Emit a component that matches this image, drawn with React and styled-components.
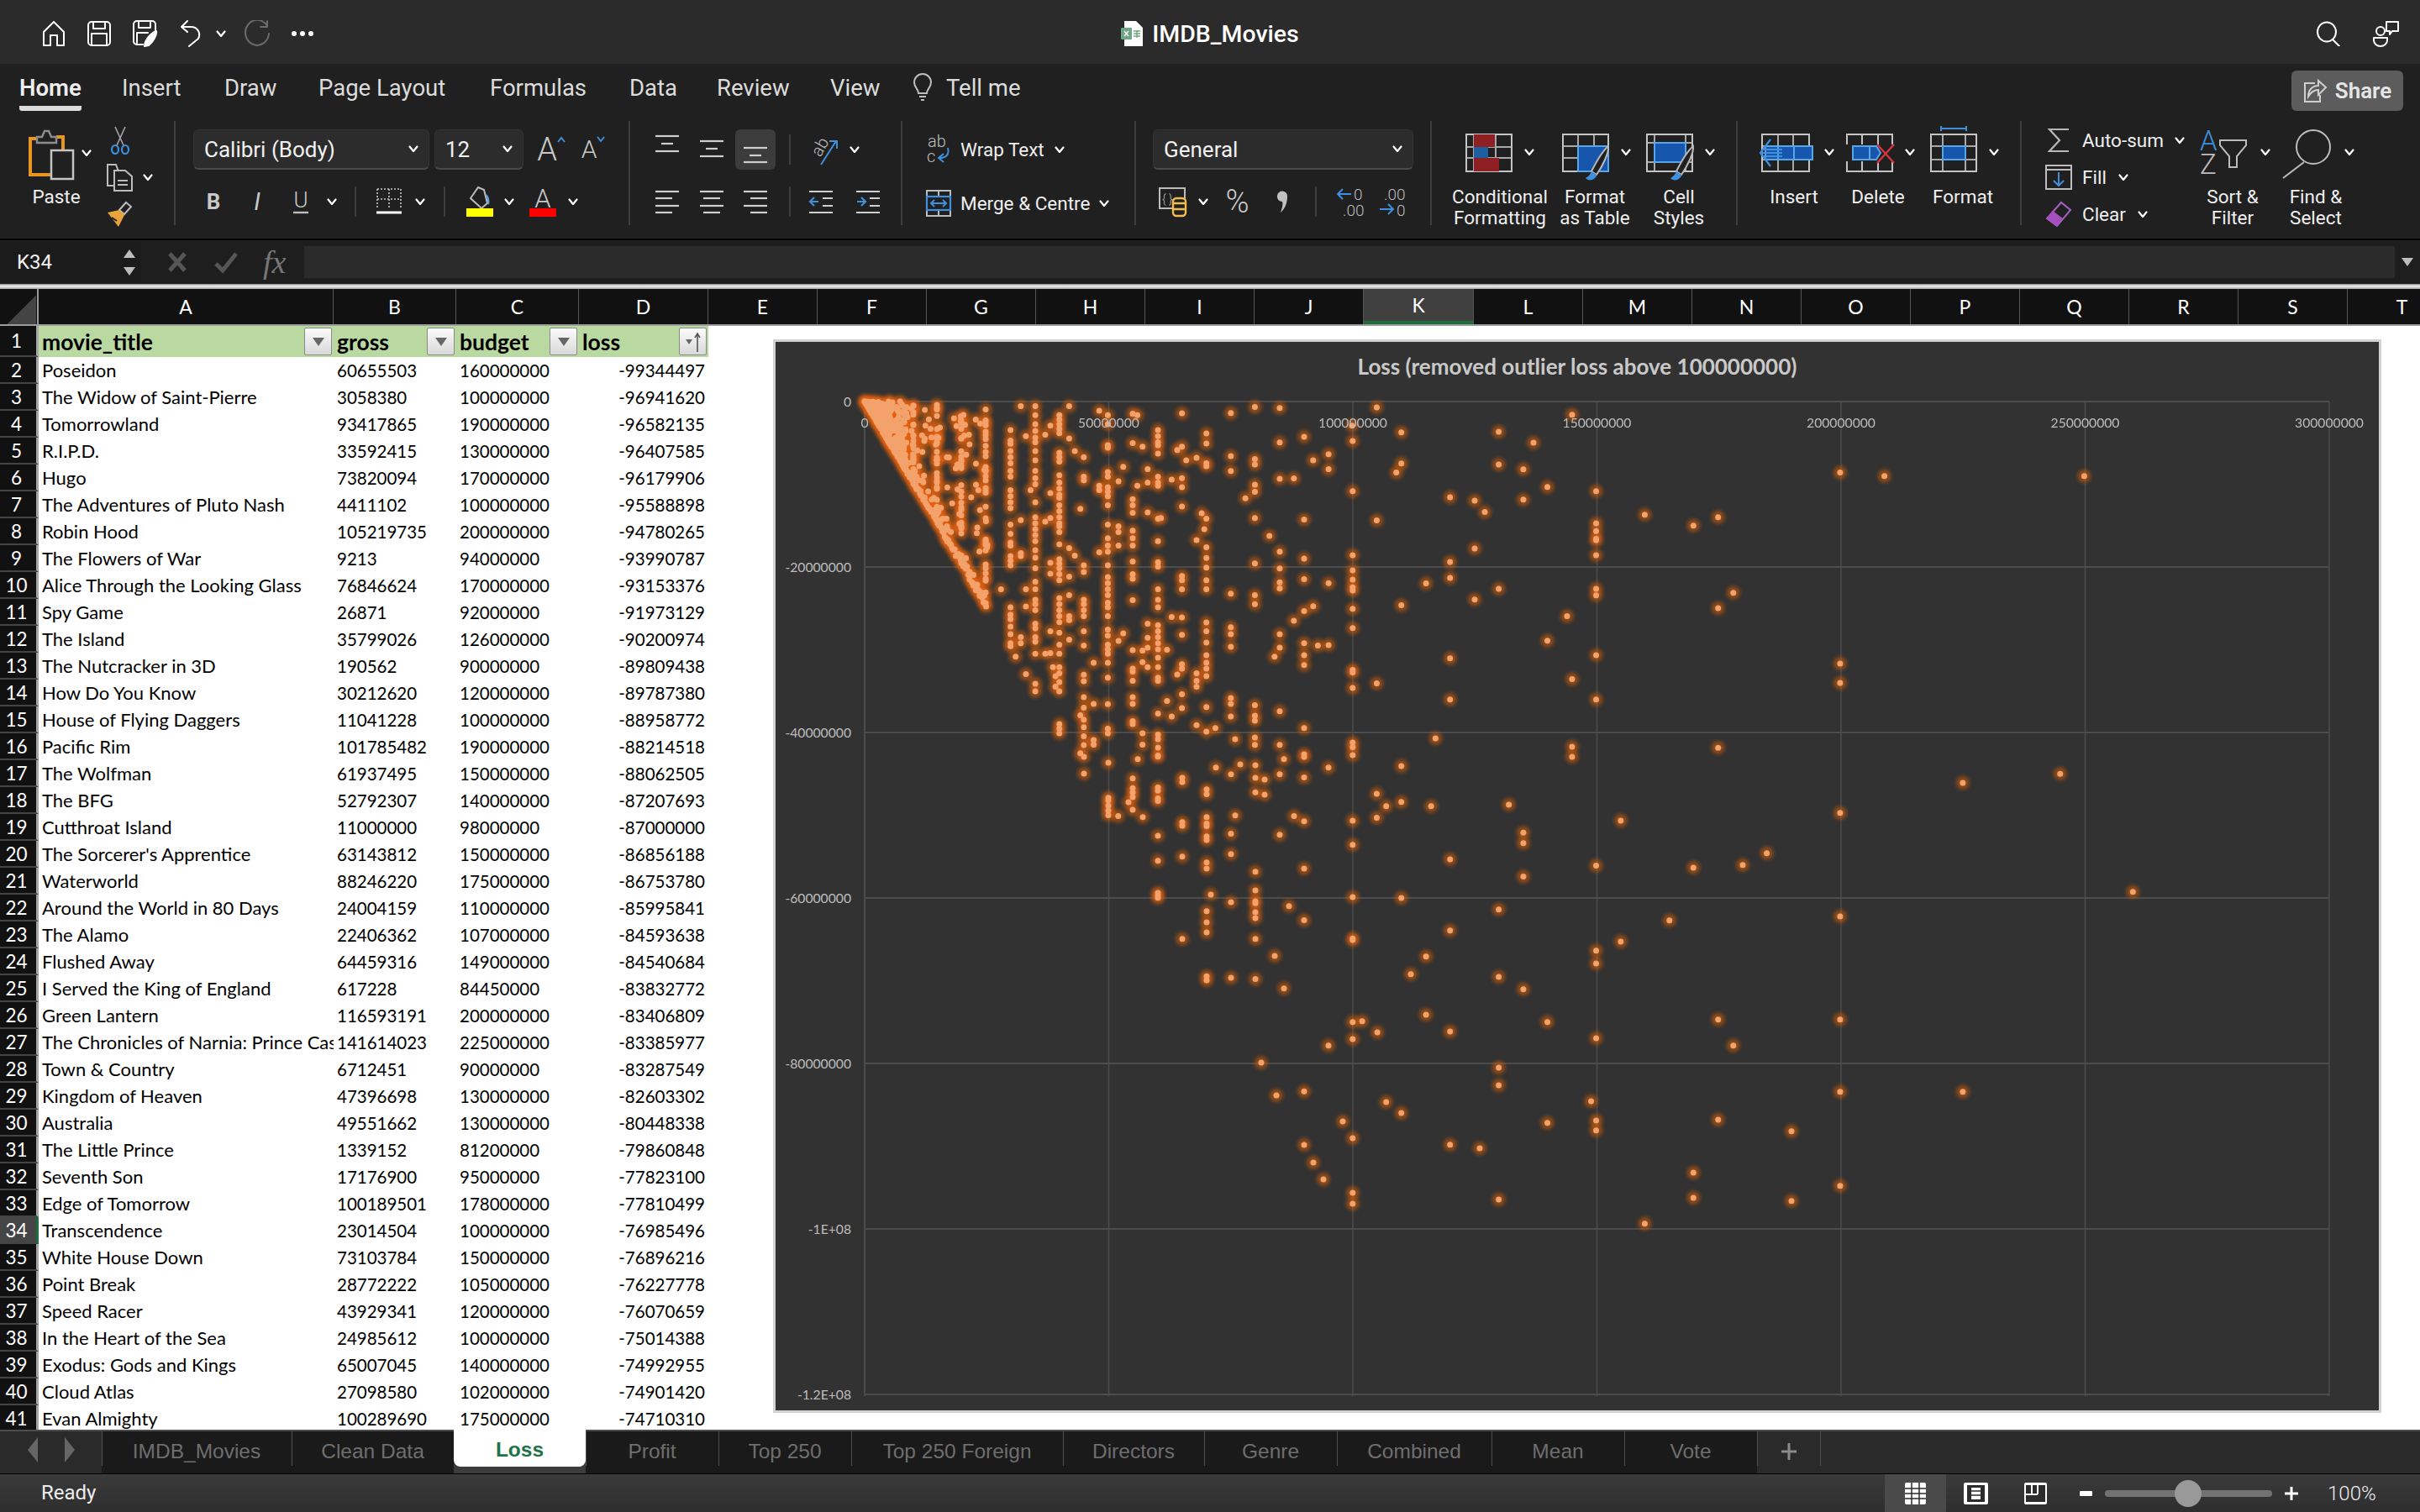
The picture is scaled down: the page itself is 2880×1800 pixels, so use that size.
import styled, { createGlobalStyle } from 'styled-components';

const GlobalStyle = createGlobalStyle`
  html, body { margin: 0; padding: 0; background: #1f1f1f; overflow: hidden; }
  * { box-sizing: border-box; }
`;

const UI = `Roboto, "Liberation Sans", sans-serif`;
const CELL = `Lato, "Liberation Sans", sans-serif`;

const movies = [
  ['Poseidon', 60655503, 160000000, -99344497],
  ['The Widow of Saint-Pierre', 3058380, 100000000, -96941620],
  ['Tomorrowland', 93417865, 190000000, -96582135],
  ['R.I.P.D.', 33592415, 130000000, -96407585],
  ['Hugo', 73820094, 170000000, -96179906],
  ['The Adventures of Pluto Nash', 4411102, 100000000, -95588898],
  ['Robin Hood', 105219735, 200000000, -94780265],
  ['The Flowers of War', 9213, 94000000, -93990787],
  ['Alice Through the Looking Glass', 76846624, 170000000, -93153376],
  ['Spy Game', 26871, 92000000, -91973129],
  ['The Island', 35799026, 126000000, -90200974],
  ['The Nutcracker in 3D', 190562, 90000000, -89809438],
  ['How Do You Know', 30212620, 120000000, -89787380],
  ['House of Flying Daggers', 11041228, 100000000, -88958772],
  ['Pacific Rim', 101785482, 190000000, -88214518],
  ['The Wolfman', 61937495, 150000000, -88062505],
  ['The BFG', 52792307, 140000000, -87207693],
  ['Cutthroat Island', 11000000, 98000000, -87000000],
  ["The Sorcerer's Apprentice", 63143812, 150000000, -86856188],
  ['Waterworld', 88246220, 175000000, -86753780],
  ['Around the World in 80 Days', 24004159, 110000000, -85995841],
  ['The Alamo', 22406362, 107000000, -84593638],
  ['Flushed Away', 64459316, 149000000, -84540684],
  ['I Served the King of England', 617228, 84450000, -83832772],
  ['Green Lantern', 116593191, 200000000, -83406809],
  ['The Chronicles of Narnia: Prince Caspian', 141614023, 225000000, -83385977],
  ['Town & Country', 6712451, 90000000, -83287549],
  ['Kingdom of Heaven', 47396698, 130000000, -82603302],
  ['Australia', 49551662, 130000000, -80448338],
  ['The Little Prince', 1339152, 81200000, -79860848],
  ['Seventh Son', 17176900, 95000000, -77823100],
  ['Edge of Tomorrow', 100189501, 178000000, -77810499],
  ['Transcendence', 23014504, 100000000, -76985496],
  ['White House Down', 73103784, 150000000, -76896216],
  ['Point Break', 28772222, 105000000, -76227778],
  ['Speed Racer', 43929341, 120000000, -76070659],
  ['In the Heart of the Sea', 24985612, 100000000, -75014388],
  ['Exodus: Gods and Kings', 65007045, 140000000, -74992955],
  ['Cloud Atlas', 27098580, 102000000, -74901420],
  ['Evan Almighty', 100289690, 175000000, -74710310],
];

const columns = 'EFGHIJKLMNOPQRST'.split('');

const ribbonTabs = [
  ['Home', 122], ['Insert', 122], ['Draw', 112], ['Page Layout', 204],
  ['Formulas', 166], ['Data', 104], ['Review', 135], ['View', 98],
];

const tabs = [
  ['IMDB_Movies', 226], ['Clean Data', 193], ['Loss', 157], ['Profit', 158],
  ['Top 250', 158], ['Top 250 Foreign', 252], ['Directors', 168], ['Genre', 158],
  ['Combined', 184], ['Mean', 158], ['Vote', 158],
];

// scatter points, read off the chart in page pixels
const farRight = [[51,65],[360,88],[12,122],[90,143],[244,141],[13,170],[299,175],[90,240],[244,243],[283,258],[82,268],[784,268],[854,279],[1170,279],[321,313],[13,326],[398,326],[167,345],[206,355],[283,352],[222,391],[475,399],[591,407],[51,417],[398,426],[552,433],[398,450],[398,478],[398,474],[206,504],[13,525],[398,525],[167,546],[13,572],[167,596],[13,601],[129,613],[13,625],[13,635],[244,630],[398,630],[398,650],[615,642],[206,663],[90,681],[591,690],[13,692],[352,715],[13,752],[321,791],[398,836],[167,846],[784,862],[13,882],[13,890],[360,911],[784,922],[51,924],[13,938],[167,974],[398,974],[144,1095],[13,1108],[13,1122],[360,1121],[591,1124],[13,1147],[360,1152],[90,1181],[1132,1205],[978,1233],[51,1267],[90,1293],[260,1301],[66,1306],[137,1306],[784,1327],[51,1342],[13,1351],[437,1351],[283,1388],[283,1421],[13,1426],[668,1452],[167,1471],[630,1489],[398,1491],[552,1497],[283,1525]]
  .map(([x, y]) => [1600 + x / 1.329, 460 + y / 2.613]);

const lowerRight = [[13,84],[90,87],[1247,65],[244,128],[784,153],[514,167],[167,203],[13,232],[13,237],[437,243],[398,275],[129,296],[398,321],[105,359],[244,369],[283,413],[129,504],[13,530],[28,527],[321,530],[591,521],[784,521],[52,567],[167,564],[13,591],[398,588],[615,614],[244,693],[244,756],[784,779],[978,779],[66,816],[390,813],[90,855],[398,882],[321,890],[591,879],[398,917],[707,920],[13,945],[167,968],[214,981],[552,1068],[784,1115],[13,1140],[244,1164],[552,1158],[707,1169],[13,1179],[475,1250]]
  .map(([x, y]) => [1600 + x / 1.329, 1040 + y / 3]);

const lowerMiddle = [[570,3],[657,21],[762,10],[834,2],[570,55],[744,70],[921,68],[921,81],[1041,36],[1128,26],[1095,57],[1182,29],[1182,68],[1215,73],[1284,10],[1269,57],[1356,67],[1443,36],[1356,3],[834,98],[834,108],[744,100],[744,114],[744,128],[1008,104],[1008,119],[657,130],[657,138],[657,155],[657,170],[657,184],[729,144],[744,167],[692,187],[780,190],[834,132],[834,140],[1182,113],[1215,120],[1008,190],[1110,185],[1320,187],[1356,203],[921,206],[921,217],[1008,210],[1008,218],[834,248],[1095,242],[1269,245],[1008,250],[1008,261],[921,313],[1095,305],[834,326],[1008,331],[1008,350],[1182,360],[1356,350],[834,426],[834,434],[834,441],[1023,431],[1182,418],[1095,455],[1182,452],[1182,458],[1302,467],[1008,483],[1182,486],[1182,504],[1008,517],[1356,511],[1008,549],[921,569],[1182,569],[1251,622],[1008,685],[1008,698],[1095,690],[1182,694],[1284,723],[1443,901],[1203,954],[1257,1056],[1356,1043],[1494,1137],[1356,1210],[1389,1265],[1425,1317]]
  .map(([x, y]) => [1100 + x / 3, 900 + y / 2.613]);

const stripes = [
  [1335,[450,500,880,1086]],[1310,[1088]],[1278,[392,668,798,867,973,1080,1120,1153,1363,1450]],[1299,[470,957]],
  [1254,[531,1005]],[1221,[296,411,532,775,831,877,897,1050,1095,1307,1419]],[1197,[722]],[1209,[1125]],[1141,[597]],
  [1163,[293,466,484,552,575,663,814,920,950,1287,1322,1338,1394,1419]],[1107,[313,456,506,915,1027,1050,1092,1263,1282,1324]],[1071,[1363]],[1117,[1400]],
  [1050,[381,414,480,490,665,760,796,828,870,900,1011,1040,1078,1120,1145,1165,1190,1293,1375]],[1039,[647]],[1045,[700]],
  [1027,[462,736,1180,1205,1225,1353]],[1003,[470]],[993,[314,425,530,560,624,856,870,900,994,1052,1150,1165,1250,1296]],[982,[436,1184]],
  [969,[535,993,1324]],[958,[1102,1273]],[937,[370,390,410,420,448,525,545,555,665,740,810,825,900,935,960,1020,1040,1060,1080,1100,1128,1160,1195,1205,1315,1385,1400,1428,1455]],[944,[663]],
  [913,[500,545,644,1015,1062,1095,1160]],[901,[425,1105,1143,1380,1418]],[878,[315,413,600,620,645,705,730,755,808,850,865,937,1103,1165,1175,1205,1260,1282,1340,1350]],
  [889,[320,555]],[856,[492,1047]],[845,[540,690,710,755,1072]],
  [820,[320,350,420,428,510,525,560,575,590,620,685,730,755,775,820,860,880,900,920,945,960,990,1035,1055,1085,1100,1115,1145,1195,1283,1365,1380]],
  [800,[305,555,570,777]],[787,[1145,1282,1403,1418]],[764,[460,525,537,820,843,935,950,970,990,1040,1088,1185,1207,1260,1295,1335,1360,1390,1420]],[756,[632,1320,1447]],
  [743,[440,788]],[730,[290,398,763,858,920,990,1003,1068]],
  [707,[320,335,350,365,380,445,460,475,520,545,565,585,595,620,640,660,680,690,710,750,800,815,830,850,870,930,950,970,990,1010,1045,1085,1115,1160,1180,1210,1240,1350,1365,1380]],
  [686,[355,580,663,812,848,1040,1113]],[674,[385,675,1115]],[692,[1160]],[698,[1190,1225]],
  [651,[290,320,350,372,395,410,440,470,505,530,550,610,660,680,700,720,740,770,795,830,875,900,935,950,970,1015,1030,1060,1075,1115,1215,1240]],[640,[570]],
  [629,[390,900,958,1183]],[617,[290,670,780,790,1060,1080]],[605,[1125]],
  [593,[370,405,415,440,460,480,505,525,570,590,610,630,685,715,745,755,790,805,820,960,985,1000,1025,1050,1080,1090]],[571,[900]],
].flatMap(([x, ys]) => ys.map((y) => [900 + x / 1.96, 380 + y / 2.8])).filter((p) => p[1] < 900);

// the crowded triangle near the origin is seeded instead of read off
const rng = (seed) => () => {
  seed = (seed + 0x6d2b79f5) | 0;
  let t = Math.imul(seed ^ (seed >>> 15), 1 | seed);
  t = (t + Math.imul(t ^ (t >>> 7), 61 | t)) ^ t;
  return ((t ^ (t >>> 14)) >>> 0) / 4294967296;
};
const buildTriangle = () => {
  const r = rng(77);
  const out = [];
  const push = (px, d) => out.push([px, 478 + (px - 1029) * 1.697 * d]);
  // rim along the budget = loss edge, thinning out towards the bottom
  for (let i = 0; i < 110; i++) push(1029 + 146 * (i / 110) ** 1.15, 1 - 0.05 * r());
  // solid corner
  for (let i = 0; i < 230; i++) push(1029 + 50 * r() ** 1.1, r());
  for (let i = 0; i < 60; i++) push(1029 + 100 * r(), 0.8 + 0.2 * r());
  // looser mesh on round budgets further out
  for (let i = 0; i < 130; i++) {
    const stripe = [1058, 1087, 1115, 1144, 1173][Math.floor(r() * 5)];
    push(stripe, 0.02 + 0.98 * r());
  }
  for (let i = 0; i < 70; i++) push(1070 + 105 * r(), 0.05 + 0.95 * r());
  return out;
};
const points = [...buildTriangle(), ...stripes, ...lowerMiddle, ...farRight, ...lowerRight]
  .map(([x, y]) => [Math.round((x - 920) * 10) / 10, Math.round((y - 404) * 10) / 10]);

const Page = styled.div`
  width: 2880px;
  height: 1800px;
  display: flex;
  flex-direction: column;
  overflow: hidden;
  font-family: ${UI};
  color: #f0f0f0;
`;

/* title bar */
const TitleBar = styled.header`
  height: 76px;
  flex: none;
  padding-top: 4px;
  background: #2b2b2b;
  display: grid;
  grid-template-columns: 1fr auto 1fr;
  align-items: center;
`;
const QuickTools = styled.div`
  display: flex;
  align-items: center;
  padding-left: 50px;
`;
const QuickIcon = styled.svg`
  display: block;
  margin-left: ${(p) => p.$ml || 0}px;
  fill: none;
  stroke: ${(p) => p.$color || '#fff'};
  stroke-width: 2;
  stroke-linejoin: round;
  stroke-linecap: round;
`;
const DocTitle = styled.div`
  display: flex;
  align-items: center;
  gap: 11px;
  font-size: 28.5px;
  font-weight: 500;
  color: #fff;
`;
const TitleRight = styled.div`
  display: flex;
  justify-content: flex-end;
  align-items: center;
  gap: 39px;
  padding-right: 24px;
`;

/* ribbon */
const RibbonTabs = styled.nav`
  height: 56px;
  flex: none;
  background: #202020;
  position: relative;
  display: flex;
  align-items: flex-start;
  padding-left: 23px;
`;
const RibbonSlot = styled.div`
  width: ${(p) => p.$w}px;
  flex: none;
`;
const RibbonTab = styled.div`
  display: inline-block;
  height: 56px;
  padding-top: 13px;
  font-size: 27.5px;
  line-height: 32px;
  font-weight: ${(p) => (p.$active ? 600 : 400)};
  color: ${(p) => (p.$active ? '#eee' : '#dcdcdc')};
  border-bottom: ${(p) => (p.$active ? '6px solid #dcdcdc' : '6px solid transparent')};
  border-radius: 0 0 3px 3px;
`;
const TellMe = styled.div`
  display: flex;
  align-items: center;
  gap: 16px;
  height: 50px;
  padding-top: 6px;
  font-size: 27.5px;
  color: #dcdcdc;
`;
const ShareButton = styled.button`
  position: absolute;
  left: 2727px;
  top: 8px;
  width: 133px;
  height: 48px;
  border: 0;
  border-radius: 6px;
  background: #5c5c5c;
  color: #e6e6e6;
  font: 600 26px ${UI};
  display: flex;
  align-items: center;
  justify-content: center;
  gap: 10px;
  padding: 0;
`;
const Ribbon = styled.section`
  height: 152px;
  flex: none;
  background: #202020;
  display: flex;
  padding-top: 12px;
`;
const Group = styled.div`
  width: ${(p) => p.$w}px;
  flex: none;
  height: 124px;
  padding-left: ${(p) => p.$pl || 0}px;
  border-right: ${(p) => (p.$last ? 'none' : '2px solid #3e3e3e')};
  display: flex;
  align-items: flex-start;
`;
const Stack = styled.div`
  display: flex;
  flex-direction: column;
  padding-top: 10px;
`;
const ToolRow = styled.div`
  display: flex;
  align-items: center;
  height: ${(p) => (p.$lower ? 40 : 48)}px;
  margin-top: ${(p) => (p.$lower ? 18 + (p.$shift || 0) : 0)}px;
`;
const Cell = styled.div`
  width: ${(p) => p.$w}px;
  height: 100%;
  flex: none;
  display: flex;
  align-items: center;
  justify-content: center;
  font-size: ${(p) => p.$size || 24}px;
  font-weight: ${(p) => p.$weight || 400};
  font-style: ${(p) => p.$italic || 'normal'};
  color: #c8c8c8;
`;
const ActiveCell = styled(Cell)`
  background: #3c3c3c;
  border-radius: 6px;
`;
const Divider = styled.div`
  width: 2px;
  height: 36px;
  background: #3e3e3e;
`;
const SelectBox = styled.div`
  width: ${(p) => p.$w}px;
  margin-right: ${(p) => p.$mr || 0}px;
  height: 48px;
  flex: none;
  background: #2c2c2c;
  border: 1px solid #333;
  border-bottom: 2px solid #4a4a4a;
  border-radius: 6px;
  padding: 0 12px;
  display: flex;
  align-items: center;
  justify-content: space-between;
  font-size: 26px;
  color: #f0f0f0;
`;
const Chevron = styled.svg`
  display: block;
  flex: none;
  width: 12px;
  height: 9px;
  margin-left: ${(p) => p.$ml || 0}px;
  margin-top: ${(p) => p.$mt || 0}px;
  fill: none;
  stroke: #fff;
  stroke-width: 2.2;
  stroke-linecap: round;
  stroke-linejoin: round;
`;
const GlyphA = styled.span`
  font-size: ${(p) => p.$size}px;
  font-weight: 300;
  color: #c8c8c8;
  line-height: 1;
`;
const LabelText = styled.span`
  font-size: 22.5px;
  color: #efefef;
  white-space: nowrap;
  margin-left: ${(p) => p.$ml || 0}px;
`;
const BigTool = styled.div`
  width: ${(p) => p.$w}px;
  margin-left: ${(p) => p.$ml || 0}px;
  flex: none;
  display: flex;
  flex-direction: column;
`;
const BigIconRow = styled.div`
  height: 78px;
  padding: 10px 0 0 ${(p) => p.$pad || 0}px;
  display: flex;
  align-items: flex-start;
`;
const BigLabel = styled.div`
  text-align: center;
  font-size: 22.5px;
  line-height: 25px;
  color: #efefef;
  white-space: nowrap;
`;
const Column3 = styled.div`
  width: ${(p) => p.$w}px;
  margin-left: ${(p) => p.$ml || 0}px;
  flex: none;
  display: flex;
  flex-direction: column;
  padding-top: 1px;
`;
const Line3 = styled.div`
  height: 44px;
  display: flex;
  align-items: center;
`;
const Line3Icon = styled.div`
  width: ${(p) => p.$w || 32}px;
  flex: none;
  display: flex;
  justify-content: center;
`;
const Svg = styled.svg`
  display: block;
  flex: none;
  overflow: visible;
`;
const IconText = styled.text`
  font-family: ${UI};
  font-weight: 300;
`;

/* formula bar */
const FormulaBar = styled.div`
  height: 54px;
  flex: none;
  background: #1e1e1e;
  border-top: 2px solid #000;
  display: flex;
  align-items: center;
`;
const NameBox = styled.div`
  width: 168px;
  height: 48px;
  flex: none;
  background: #1b1b1b;
  padding: 0 7px 0 20px;
  display: flex;
  align-items: center;
  justify-content: space-between;
  font-size: 24px;
  color: #efefef;
`;
const Spinner = styled.div`
  display: flex;
  flex-direction: column;
  gap: 11px;
`;
const Triangle = styled.div`
  width: 0;
  height: 0;
  border-left: ${(p) => p.$s || 7}px solid transparent;
  border-right: ${(p) => p.$s || 7}px solid transparent;
  border-${(p) => (p.$up ? 'bottom' : 'top')}: ${(p) => (p.$s || 7) * 1.5}px solid ${(p) => p.$color || '#bdbdbd'};
`;
const FormulaTools = styled.div`
  width: 194px;
  flex: none;
  display: flex;
  align-items: center;
  padding-left: 32px;
  gap: 33px;
`;
const FxLabel = styled.span`
  font: italic 38px "Liberation Serif", serif;
  color: #777;
  margin-left: -3px;
`;
const FormulaInput = styled.div`
  flex: 1;
  height: 38px;
  background: #2b2b2b;
`;
const FormulaEnd = styled.div`
  width: 30px;
  flex: none;
  display: flex;
  justify-content: center;
`;
const Ruler = styled.div`
  height: 6px;
  flex: none;
  background: linear-gradient(#8e8e8e, #f2f2f2 45%, #a0a0a0);
`;

/* sheet */
const Sheet = styled.main`
  height: 1358px;
  flex: none;
  position: relative;
  overflow: hidden;
  background: #fff;
  font-family: ${CELL};
  color: #000;
`;
const HeaderRow = styled.div`
  height: 44px;
  display: flex;
  background: #111;
  border-bottom: 2px solid #9c9c9c;
`;
const Corner = styled.div`
  width: 46px;
  flex: none;
  position: relative;
  border-right: 2px solid #999;
  background: linear-gradient(135deg, #111 50%, #444 50%);
  background-size: 34px 34px;
  background-position: 9px 8px;
  background-repeat: no-repeat;
`;
const ColHead = styled.div`
  width: ${(p) => p.$w}px;
  flex: none;
  display: flex;
  align-items: center;
  justify-content: center;
  font-size: 23px;
  color: #fff;
  background: ${(p) => (p.$selected ? '#404040' : '#111')};
  border-right: 1px solid #555;
  border-bottom: ${(p) => (p.$selected ? '4px solid #1f6b3b' : 'none')};
`;
const Row = styled.div`
  height: ${(p) => (p.$header ? 37 : 32)}px;
  display: flex;
`;
const RowHead = styled.div`
  width: 46px;
  flex: none;
  display: flex;
  align-items: center;
  justify-content: center;
  padding-right: 4px;
  background: ${(p) => (p.$selected ? '#454545' : '#111')};
  color: #fff;
  font-size: 22.5px;
  border-right: 3px solid ${(p) => (p.$selected ? '#1f6b3b' : '#a5a5a5')};
  border-bottom: 2px solid #444;
`;
const DataCell = styled.div`
  width: ${(p) => p.$w}px;
  flex: none;
  padding: 0 ${(p) => (p.$right ? 4 : 4)}px 0 ${(p) => (p.$right ? 0 : 4)}px;
  text-align: ${(p) => (p.$right ? 'right' : 'left')};
  font-size: ${(p) => (p.$title ? 22 : 20.5)}px;
  line-height: 32px;
  white-space: nowrap;
  overflow: hidden;
`;
const HeadCell = styled.div`
  width: ${(p) => p.$w}px;
  flex: none;
  background: #b9d9a1;
  padding: 0 2px 0 4px;
  display: flex;
  align-items: center;
  justify-content: space-between;
  font-size: 26.5px;
  font-weight: 700;
`;
const FilterBtn = styled.div`
  width: 33px;
  height: 33px;
  flex: none;
  border: 1px solid #8b8b8b;
  border-radius: 2px;
  background: linear-gradient(#fbfbfb, #d9d9d9);
  display: flex;
  align-items: center;
  justify-content: center;
  gap: 2px;
`;
const ChartFrame = styled.div`
  position: absolute;
  left: 920px;
  top: 60px;
  width: 1914px;
  height: 1278px;
  background: #323232;
  box-shadow: inset 0 0 0 3px #d2d2d2;
`;
const ChartTitle = styled.text`
  font: 700 26px ${CELL};
  fill: #c9c9c9;
  text-anchor: middle;
`;
const AxisLabel = styled.text`
  font: 400 15.7px ${CELL};
  fill: #bdbdbd;
  text-anchor: ${(p) => p.$anchor};
`;

/* tabs + status */
const TabBar = styled.div`
  height: 53px;
  flex: none;
  display: flex;
  background: #2a2a2a;
  border-top: 2px solid #4d4d4d;
  border-bottom: 1px solid #000;
`;
const TabNav = styled.div`
  width: 121px;
  flex: none;
  display: flex;
  align-items: center;
  justify-content: center;
  gap: 32px;
  padding-bottom: 6px;
`;
const NavArrow = styled.div`
  width: 0;
  height: 0;
  border-top: 15px solid transparent;
  border-bottom: 15px solid transparent;
  border-${(p) => (p.$left ? 'right' : 'left')}: 12px solid #666;
`;
const SheetTab = styled.div`
  width: ${(p) => p.$w}px;
  flex: none;
  position: relative;
  display: flex;
  align-items: center;
  justify-content: center;
  padding-bottom: 2px;
  background: #1a1a1a;
  color: #6e6e6e;
  font: 24.5px "Liberation Sans", sans-serif;
  &::before {
    content: '';
    position: absolute;
    left: 0;
    top: 0;
    bottom: 9px;
    width: 1px;
    background: #4e4e4e;
  }
`;
const ActiveTab = styled.div`
  width: ${(p) => p.$w}px;
  flex: none;
  margin-top: -2px;
  height: 52px;
  background: #3c3c3c;
`;
const ActiveFace = styled.div`
  height: 44px;
  background: #fff;
  border-radius: 0 0 8px 8px;
  color: #217346;
  font: 700 24.5px "Liberation Sans", sans-serif;
  display: flex;
  align-items: center;
  justify-content: center;
  padding-top: 4px;
`;
const AddTab = styled(SheetTab)`
  width: 76px;
  background: transparent;
  &::after {
    content: '';
    position: absolute;
    right: 0;
    top: 0;
    bottom: 9px;
    width: 1px;
    background: #4e4e4e;
  }
`;
const StatusBar = styled.footer`
  flex: 1;
  display: flex;
  justify-content: space-between;
  background: linear-gradient(#3a3a3a, #2e2e2e);
`;
const Ready = styled.div`
  padding-left: 49px;
  font-size: 24px;
  line-height: 45px;
  color: #eee;
`;
const StatusRight = styled.div`
  display: flex;
  align-items: center;
  padding-right: 48px;
`;
const ViewBtn = styled.div`
  width: ${(p) => p.$w}px;
  height: 45px;
  display: flex;
  align-items: center;
  justify-content: center;
  background: ${(p) => (p.$active ? '#4a4a4a' : 'transparent')};
`;
const Zoomer = styled.div`
  width: 199px;
  height: 8px;
  margin: 0 15px;
  position: relative;
  background: #737373;
  border-radius: 4px;
`;
const ZoomThumb = styled.div`
  position: absolute;
  left: 83px;
  top: -12px;
  width: 32px;
  height: 32px;
  border-radius: 50%;
  background: #999;
`;
const ZoomText = styled.div`
  width: 62px;
  margin-left: 35px;
  font-size: 24px;
  font-weight: 300;
  color: #eee;
  white-space: nowrap;
`;

const Chev = (p) => (
  <Chevron viewBox="0 0 12 9" {...p}><path d="M1.5 1.5 6 7l4.5-5.5" /></Chevron>
);

const AlignLines = ({ ys, widths, align = 'left', w = 28, h = 48 }) => (
  <Svg width={w} height={h} viewBox={`0 0 ${w} ${h}`} stroke="#cfcfcf" strokeWidth="2.2">
    {ys.map((y, i) => {
      const len = widths[i];
      const x = align === 'left' ? 0 : align === 'right' ? w - len : (w - len) / 2;
      return <line key={y} x1={x} x2={x + len} y1={y} y2={y} />;
    })}
  </Svg>
);

const Brush = ({ x = 0, y = 0 }) => (
  <g transform={`translate(${x} ${y})`}>
    <path d="M27 0C28 8 20 24 13 34l-6-4C12 20 20 6 27 0Z" fill="#202020" stroke="#b8b8b8" strokeWidth="2" />
    <path d="M7 30c-2 5-5 7-7 8 2 3 8 4 12-1 2-3 1-4 1-3Z" fill="#3f8fdc" />
  </g>
);

const GridFrame = ({ x, w, cols, rows }) => (
  <g fill="none" stroke="#a8a8a8" strokeWidth="2">
    {cols.map((c) => <line key={c} x1={c} x2={c} y1="6" y2="50" />)}
    {rows.map((r) => <line key={r} x1={x} x2={x + w} y1={r} y2={r} />)}
    <rect x={x} y="6" width={w} height="44" stroke="#c4c4c4" />
  </g>
);

const App = () => (
  <Page>
    <GlobalStyle />
    <TitleBar>
      <QuickTools>
        <QuickIcon width="28" height="30" viewBox="0 0 28 30"><path d="M14 1 26 13v16h-8V17h-8v12H2V13Z" /></QuickIcon>
        <QuickIcon $ml={26} width="28" height="30" viewBox="0 0 28 30"><rect x="1" y="1" width="26" height="28" rx="4" /><path d="M7 1v8h14V1M5 29V15h18v14" /></QuickIcon>
        <QuickIcon $ml={26} width="30" height="32" viewBox="0 0 30 32"><path d="M12 29H5a4 4 0 0 1-4-4V5a4 4 0 0 1 4-4h18a4 4 0 0 1 4 4v9M7 1v8h14V1M5 27V15h13" /><path d="M28 13c1 5-4 13-9 17l-5 1c0-6 6-15 14-18Z" fill="#fff" /></QuickIcon>
        <QuickIcon $ml={26} width="26" height="32" viewBox="0 0 26 32"><path d="M9 1 2 8l7 6M2 8h11c9 0 12 8 9 14L11 31" /></QuickIcon>
        <Chev $ml={17} />
        <QuickIcon $ml={21} $color="#6c6c6c" width="32" height="32" viewBox="0 0 32 32"><path d="M28 7A14 15 0 1 0 30 16M28 1v7h-8" /></QuickIcon>
        <QuickIcon $ml={25} width="26" height="6" viewBox="0 0 26 6"><g fill="#fff" stroke="none"><circle cx="3" cy="3" r="3" /><circle cx="13" cy="3" r="3" /><circle cx="23" cy="3" r="3" /></g></QuickIcon>
      </QuickTools>
      <DocTitle>
        <Svg width="26" height="30" viewBox="0 0 26 30">
          <path d="M4 0h14l8 8v22H4Z" fill="#fff" />
          <rect y="8" width="13" height="14" rx="1" fill="#6ea783" />
          <path d="M4 12l5 6M9 12l-5 6" stroke="#fff" strokeWidth="1.4" />
          <path d="M15 12h8M15 15h8M15 18h8M19 11v9" stroke="#6ea783" strokeWidth="1.4" />
        </Svg>
        IMDB_Movies
      </DocTitle>
      <TitleRight>
        <QuickIcon width="28" height="30" viewBox="0 0 28 30"><ellipse cx="12" cy="13" rx="11" ry="11.5" /><path d="M19 22l8 8" /></QuickIcon>
        <QuickIcon width="32" height="32" viewBox="0 0 32 32"><circle cx="9" cy="13" r="5" /><path d="M1 21h16v3a8 7 0 0 1-16 0ZM16 2h14v11h-7l-3 4v-4h-4Z" /></QuickIcon>
      </TitleRight>
    </TitleBar>

    <RibbonTabs>
      {ribbonTabs.map(([name, w]) => (
        <RibbonSlot key={name} $w={w}><RibbonTab $active={name === 'Home'}>{name}</RibbonTab></RibbonSlot>
      ))}
      <TellMe>
        <Svg width="24" height="32" viewBox="0 0 24 32" fill="none" stroke="#bdbdbd" strokeWidth="2">
          <path d="M7 23c0-5-5-7-5-13a10 10 0 0 1 20 0c0 6-5 8-5 13Z" /><path d="M8 27h8M10 31h4" />
        </Svg>
        Tell me
      </TellMe>
      <ShareButton>
        <Svg width="28" height="30" viewBox="0 0 28 30" fill="none" stroke="#d0d0d0" strokeWidth="2">
          <path d="M14 6H2v22h18V20" /><path d="M6 22c0-8 5-13 12-13V3l9 8-9 9v-6c-5 0-9 3-12 8Z" />
        </Svg>
        Share
      </ShareButton>
    </RibbonTabs>

    <Ribbon>
      <Group $w={209} $pl={30}>
        <BigTool $w={74}>
          <BigIconRow $pad={4}>
            <Svg width="54" height="60" viewBox="0 0 54 60" fill="none">
              <path d="M26 11H2v43h24" stroke="#e8961e" strokeWidth="4" />
              <path d="M33 9h8v17" stroke="#e8961e" strokeWidth="4" />
              <path d="M10 16V9h6l3-7h5l3 7h6v7Z" fill="#202020" stroke="#8c8c8c" strokeWidth="2.5" />
              <rect x="27" y="25" width="26" height="34" fill="#202020" stroke="#c4c4c4" strokeWidth="2.5" />
            </Svg>
            <Chev $ml={9} $mt={24} />
          </BigIconRow>
          <BigLabel>Paste</BigLabel>
        </BigTool>
        <Column3 $w={60} $ml={23}>
          <Line3>
            <Line3Icon $w={32}>
              <Svg width="22" height="32" viewBox="0 0 22 32" fill="none">
                <path d="M5 0l10 22M17 0 7 22" stroke="#a5a5a5" strokeWidth="1.6" />
                <ellipse cx="5" cy="27" rx="4" ry="5" stroke="#3f8fdc" strokeWidth="2.2" />
                <ellipse cx="17" cy="27" rx="4" ry="5" stroke="#3f8fdc" strokeWidth="2.2" />
              </Svg>
            </Line3Icon>
          </Line3>
          <Line3>
            <Line3Icon $w={32}>
              <Svg width="32" height="32" viewBox="0 0 32 32" fill="none" stroke="#bcbcbc" strokeWidth="2">
                <path d="M9 26H1V1h10l3 8" /><path d="M9 8h13l8 7v17H9ZM13 20h12M13 25h12" />
              </Svg>
            </Line3Icon>
            <Chev $ml={11} />
          </Line3>
          <Line3>
            <Line3Icon $w={32}>
              <Svg width="32" height="30" viewBox="0 0 32 30" fill="none">
                <path d="M23 1l6 5-8 9-6-5Z" stroke="#bcbcbc" strokeWidth="2" />
                <path d="M1 13l14-3 6 6-7 14Z" fill="#e8a33a" />
                <path d="M6 19l6 4" stroke="#202020" strokeWidth="2" />
              </Svg>
            </Line3Icon>
          </Line3>
        </Column3>
      </Group>

      <Group $w={541} $pl={21}>
        <Stack>
          <ToolRow>
            <SelectBox $w={281} $mr={6}>Calibri (Body)<Chev /></SelectBox>
            <SelectBox $w={106} $mr={10}>12<Chev /></SelectBox>
            <Cell $w={46}>
              <GlyphA $size={38}>A</GlyphA>
              <Svg width="10" height="8" viewBox="0 0 10 8" fill="none" stroke="#3f8fdc" strokeWidth="2" style={{ marginBottom: 24 }}><path d="M1 7l4-5 4 5" /></Svg>
            </Cell>
            <Cell $w={7} />
            <Cell $w={40}>
              <GlyphA $size={30}>A</GlyphA>
              <Svg width="10" height="8" viewBox="0 0 10 8" fill="none" stroke="#3f8fdc" strokeWidth="2" style={{ marginBottom: 24 }}><path d="M1 1l4 5 4-5" /></Svg>
            </Cell>
          </ToolRow>
          <ToolRow $lower>
            <Cell $w={48} $weight={700} $size={26}>B</Cell>
            <Cell $w={56} $italic="italic" $size={29} $weight={400}>I</Cell>
            <Cell $w={48}>
              <Svg width="18" height="30" viewBox="0 0 18 30">
                <IconText x="9" y="22" fontSize="26" fill="#c8c8c8" textAnchor="middle">U</IconText>
                <path d="M0 28h18" stroke="#bdbdbd" strokeWidth="2.4" />
              </Svg>
            </Cell>
            <Cell $w={26}><Chev /></Cell>
            <Cell $w={30}><Divider /></Cell>
            <Cell $w={50}>
              <Svg width="30" height="32" viewBox="0 0 30 32" fill="none">
                <path d="M1 1v24M29 1v24M1 1h28M1 13h28M15 1v24" stroke="#c8c8c8" strokeWidth="1.6" strokeDasharray="2 2" />
                <path d="M0 29h30" stroke="#fff" strokeWidth="3" />
              </Svg>
            </Cell>
            <Cell $w={24}><Chev /></Cell>
            <Cell $w={34}><Divider /></Cell>
            <Cell $w={49}>
              <Svg width="32" height="36" viewBox="0 0 32 36" fill="none">
                <path d="M14 1l7 3 4 16-7 6L5 14Z" stroke="#bcbcbc" strokeWidth="2" />
                <path d="M24 9c3 3 4 8 3 13-2-3-3-8-3-13Z" fill="#58a6e8" />
                <rect y="26" width="32" height="10" fill="#ff0" />
              </Svg>
            </Cell>
            <Cell $w={22}><Chev /></Cell>
            <Cell $w={57}>
              <Svg width="32" height="36" viewBox="0 0 32 36">
                <IconText x="16" y="25" fontSize="31" fill="#c8c8c8" textAnchor="middle">A</IconText>
                <rect y="26" width="32" height="10" fill="#f00" />
              </Svg>
            </Cell>
            <Cell $w={16}><Chev /></Cell>
          </ToolRow>
        </Stack>
      </Group>

      <Group $w={324} $pl={19}>
        <Stack>
          <ToolRow>
            <Cell $w={50}><AlignLines ys={[8, 17, 26]} widths={[28, 14, 28]} align="center" /></Cell>
            <Cell $w={56}><AlignLines ys={[14, 23, 32]} widths={[28, 14, 28]} align="center" /></Cell>
            <ActiveCell $w={48}><AlignLines ys={[22, 31, 39]} widths={[28, 14, 28]} align="center" /></ActiveCell>
            <Cell $w={34}><Divider /></Cell>
            <Cell $w={48}>
              <Svg width="34" height="40" viewBox="0 0 34 40" fill="none">
                <IconText x="2" y="24" fontSize="20" fill="#bdbdbd" transform="rotate(-60 12 18)">ab</IconText>
                <path d="M13 38 31 10M23 10h9v9" stroke="#3f8fdc" strokeWidth="2" />
              </Svg>
            </Cell>
            <Cell $w={24}><Chev /></Cell>
          </ToolRow>
          <ToolRow $lower>
            <Cell $w={50}><AlignLines ys={[8, 16, 25, 33]} widths={[28, 20, 28, 20]} h={40} /></Cell>
            <Cell $w={56}><AlignLines ys={[8, 16, 25, 33]} widths={[28, 20, 28, 20]} align="center" h={40} /></Cell>
            <Cell $w={48}><AlignLines ys={[8, 16, 25, 33]} widths={[28, 20, 28, 20]} align="right" h={40} /></Cell>
            <Cell $w={34}><Divider /></Cell>
            <Cell $w={40}>
              <Svg width="28" height="40" viewBox="0 0 28 40" fill="none">
                <path d="M0 8h28M16 16h12M16 25h12M0 33h28" stroke="#cfcfcf" strokeWidth="2.2" />
                <path d="M11 20H1M6 15l-5 5 5 5" stroke="#3f8fdc" strokeWidth="2.2" />
              </Svg>
            </Cell>
            <Cell $w={72}>
              <Svg width="28" height="40" viewBox="0 0 28 40" fill="none">
                <path d="M0 8h28M16 16h12M16 25h12M0 33h28" stroke="#cfcfcf" strokeWidth="2.2" />
                <path d="M1 20h10M6 15l5 5-5 5" stroke="#3f8fdc" strokeWidth="2.2" />
              </Svg>
            </Cell>
          </ToolRow>
        </Stack>
      </Group>

      <Group $w={278} $pl={25}>
        <Stack>
          <ToolRow>
            <Cell $w={36}>
              <Svg width="28" height="34" viewBox="0 0 28 34">
                <IconText x="1" y="14" fontSize="20" fill="#bdbdbd">ab</IconText>
                <IconText x="0" y="32" fontSize="20" fill="#bdbdbd">c</IconText>
                <path d="M25 15c2 8-2 12-10 12M20 22l-6 5 6 5" fill="none" stroke="#3f8fdc" strokeWidth="2" />
              </Svg>
            </Cell>
            <LabelText $ml={8}>Wrap Text</LabelText>
            <Chev $ml={12} />
          </ToolRow>
          <ToolRow $lower $shift={2}>
            <Cell $w={36}>
              <Svg width="30" height="32" viewBox="0 0 30 32" fill="none">
                <path d="M1 1h28v30H1ZM1 8h28M1 24h28M15 1v7M15 24v7" stroke="#bdbdbd" strokeWidth="2" />
                <rect x="1" y="8" width="28" height="16" stroke="#3f8fdc" strokeWidth="2.2" />
                <path d="M6 16h18M10 12l-4 4 4 4M20 12l4 4-4 4" stroke="#3f8fdc" strokeWidth="2" />
              </Svg>
            </Cell>
            <LabelText $ml={8}>Merge &amp; Centre</LabelText>
            <Chev $ml={11} />
          </ToolRow>
        </Stack>
      </Group>

      <Group $w={352} $pl={20}>
        <Stack>
          <ToolRow>
            <SelectBox $w={310}>General<Chev /></SelectBox>
          </ToolRow>
          <ToolRow $lower>
            <Cell $w={48}>
              <Svg width="34" height="36" viewBox="0 0 34 36" fill="none">
                <rect x="1" y="2" width="30" height="24" stroke="#bdbdbd" strokeWidth="2" />
                <IconText x="4" y="20" fontSize="14" fill="#bdbdbd">{'{ }'}</IconText>
                <rect x="17" y="14" width="15" height="21" rx="4" fill="#202020" stroke="#f2bd4e" strokeWidth="2.4" />
                <path d="M17 20h15M17 27h15" stroke="#f2bd4e" strokeWidth="2.4" />
              </Svg>
            </Cell>
            <Cell $w={24}><Chev /></Cell>
            <Cell $w={57} $size={38} $weight={300}>%</Cell>
            <Cell $w={49}>
              <Svg width="16" height="28" viewBox="0 0 16 28"><path d="M2 7a6 6 0 1 1 12 1c0 8-3 15-8 19 2-6 3-9 2-13a6 6 0 0 1-6-7Z" fill="#c0c0c0" /></Svg>
            </Cell>
            <Cell $w={32}><Divider /></Cell>
            <Cell $w={50}>
              <Svg width="32" height="36" viewBox="0 0 32 36" fill="none">
                <IconText x="20" y="16" fontSize="19" fill="#bdbdbd">0</IconText>
                <IconText x="7" y="35" fontSize="19" fill="#bdbdbd">.00</IconText>
                <path d="M17 9H1M7 3 1 9l6 6" stroke="#3f8fdc" strokeWidth="2" />
              </Svg>
            </Cell>
            <Cell $w={50}>
              <Svg width="32" height="36" viewBox="0 0 32 36" fill="none">
                <IconText x="6" y="16" fontSize="19" fill="#bdbdbd">.00</IconText>
                <IconText x="21" y="35" fontSize="19" fill="#bdbdbd">0</IconText>
                <path d="M1 27h16M11 21l6 6-6 6" stroke="#3f8fdc" strokeWidth="2" />
              </Svg>
            </Cell>
          </ToolRow>
        </Stack>
      </Group>

      <Group $w={364} $pl={23}>
        <BigTool $w={116}>
          <BigIconRow $pad={17}>
            <Svg width="56" height="60" viewBox="0 0 56 60">
              <GridFrame x={1} w={54} cols={[10, 36]} rows={[21, 34]} />
              <rect x="10" y="6" width="25" height="15" fill="#8e1f23" />
              <rect x="10" y="21" width="17" height="13" fill="#1d5fa0" />
              <rect x="10" y="34" width="30" height="16" fill="#8e1f23" />
            </Svg>
            <Chev $ml={14} $mt={23} />
          </BigIconRow>
          <BigLabel>Conditional<br />Formatting</BigLabel>
        </BigTool>
        <BigTool $w={110}>
          <BigIconRow $pad={16}>
            <Svg width="56" height="60" viewBox="0 0 56 60">
              <GridFrame x={1} w={54} cols={[19, 38]} rows={[20, 34]} />
              <rect x="19" y="20" width="36" height="30" fill="#1656ad" stroke="#58a6e8" strokeWidth="2" />
              <Brush x={28} y={20} />
            </Svg>
            <Chev $ml={14} $mt={23} />
          </BigIconRow>
          <BigLabel>Format<br />as Table</BigLabel>
        </BigTool>
        <BigTool $w={90}>
          <BigIconRow $pad={6}>
            <Svg width="56" height="60" viewBox="0 0 56 60">
              <GridFrame x={1} w={54} cols={[10, 47]} rows={[16, 39]} />
              <rect x="10" y="16" width="37" height="23" fill="#1656ad" stroke="#58a6e8" strokeWidth="2" />
              <Brush x={29} y={20} />
            </Svg>
            <Chev $ml={14} $mt={23} />
          </BigIconRow>
          <BigLabel>Cell<br />Styles</BigLabel>
        </BigTool>
      </Group>

      <Group $w={338} $pl={22}>
        <BigTool $w={90}>
          <BigIconRow $pad={3}>
            <Svg width="60" height="60" viewBox="0 0 60 60" fill="none">
              <GridFrame x={4} w={56} cols={[23, 41]} rows={[20, 36]} />
              <rect x="8" y="20" width="56" height="16" fill="#1656ad" stroke="#58a6e8" strokeWidth="2" />
              <path d="M42 20v16M23 20v16" stroke="#58a6e8" strokeWidth="2" />
              <path d="M14 12 2 28l12 16M2 28h26M6 24h22M6 32h22" stroke="#3f8fdc" strokeWidth="2.2" />
            </Svg>
            <Chev $ml={18} $mt={23} />
          </BigIconRow>
          <BigLabel>Insert</BigLabel>
        </BigTool>
        <BigTool $w={90} $ml={10}>
          <BigIconRow $pad={7}>
            <Svg width="56" height="60" viewBox="0 0 56 60" fill="none">
              <path d="M1 18V6h54v12M1 38v12h54V38M19 6v12M38 6v12M19 38v12M38 38v12" stroke="#c4c4c4" strokeWidth="2" />
              <path d="M8 20h28l5 8-5 8H8Z" fill="#1656ad" stroke="#58a6e8" strokeWidth="2" />
              <path d="M28 20v16" stroke="#58a6e8" strokeWidth="2" />
              <path d="M37 18l20 22M57 18 37 40" stroke="#d8343f" strokeWidth="2.4" />
            </Svg>
            <Chev $ml={14} $mt={23} />
          </BigIconRow>
          <BigLabel>Delete</BigLabel>
        </BigTool>
        <BigTool $w={90} $ml={11}>
          <BigIconRow $pad={6}>
            <Svg width="56" height="60" viewBox="0 0 56 60" fill="none">
              <GridFrame x={1} w={54} cols={[15, 42]} rows={[20, 36]} />
              <rect x="15" y="20" width="27" height="16" fill="#1656ad" stroke="#58a6e8" strokeWidth="2" />
              <path d="M13 -1h30M13 -4v6M43 -4v6" stroke="#3f8fdc" strokeWidth="2" />
            </Svg>
            <Chev $ml={14} $mt={23} />
          </BigIconRow>
          <BigLabel>Format</BigLabel>
        </BigTool>
      </Group>

      <Group $w={475} $pl={28} $last>
        <Column3 $w={178}>
          <Line3>
            <Line3Icon>
              <Svg width="26" height="28" viewBox="0 0 26 28" fill="none" stroke="#b8b8b8" strokeWidth="2.2"><path d="M25 1H2l12 13L2 27h23" /></Svg>
            </Line3Icon>
            <LabelText $ml={12}>Auto-sum</LabelText>
            <Chev $ml={13} />
          </Line3>
          <Line3>
            <Line3Icon>
              <Svg width="32" height="30" viewBox="0 0 32 30" fill="none">
                <rect x="1" y="1" width="30" height="28" stroke="#bdbdbd" strokeWidth="2" />
                <path d="M1 6h30" stroke="#bdbdbd" strokeWidth="2" />
                <path d="M16 9v16M10 19l6 6 6-6" stroke="#3f8fdc" strokeWidth="2" />
              </Svg>
            </Line3Icon>
            <LabelText $ml={12}>Fill</LabelText>
            <Chev $ml={14} />
          </Line3>
          <Line3>
            <Line3Icon>
              <Svg width="30" height="30" viewBox="0 0 30 30" fill="none">
                <path d="M18 1l11 9-16 19L1 20Z" stroke="#a960c6" strokeWidth="2" />
                <path d="M8 11l12 9-7 9L1 20Z" fill="#a34fbe" />
              </Svg>
            </Line3Icon>
            <LabelText $ml={12}>Clear</LabelText>
            <Chev $ml={14} />
          </Line3>
        </Column3>
        <BigTool $w={90}>
          <BigIconRow $pad={6}>
            <Svg width="58" height="60" viewBox="0 0 58 60" fill="none">
              <IconText x="0" y="25" fontSize="33" fill="#3f8fdc">A</IconText>
              <IconText x="0" y="53" fontSize="33" fill="#bdbdbd">Z</IconText>
              <path d="M24 13h31v6L44 32v13h-9V32L24 19Z" stroke="#bdbdbd" strokeWidth="2" />
            </Svg>
            <Chev $ml={14} $mt={23} />
          </BigIconRow>
          <BigLabel>Sort &amp;<br />Filter</BigLabel>
        </BigTool>
        <BigTool $w={90} $ml={9}>
          <BigIconRow $pad={5}>
            <Svg width="60" height="60" viewBox="0 0 60 60" fill="none" stroke="#bdbdbd" strokeWidth="2">
              <circle cx="37" cy="21" r="20" /><path d="M26 39 1 58" />
            </Svg>
            <Chev $ml={14} $mt={23} />
          </BigIconRow>
          <BigLabel>Find &amp;<br />Select</BigLabel>
        </BigTool>
      </Group>
    </Ribbon>

    <FormulaBar>
      <NameBox>
        K34
        <Spinner><Triangle $up /><Triangle /></Spinner>
      </NameBox>
      <FormulaTools>
        <Svg width="22" height="24" viewBox="0 0 22 24" fill="none" stroke="#565656" strokeWidth="5"><path d="M2 2l18 20M20 2 2 22" /></Svg>
        <Svg width="28" height="24" viewBox="0 0 28 24" fill="none" stroke="#565656" strokeWidth="5"><path d="M2 14l8 8L26 2" /></Svg>
        <FxLabel>fx</FxLabel>
      </FormulaTools>
      <FormulaInput />
      <FormulaEnd><Triangle $color="#bdbdbd" /></FormulaEnd>
    </FormulaBar>
    <Ruler />

    <Sheet>
      <HeaderRow>
        <Corner />
        <ColHead $w={351}>A</ColHead>
        <ColHead $w={146}>B</ColHead>
        <ColHead $w={146}>C</ColHead>
        <ColHead $w={154}>D</ColHead>
        {columns.map((c) => (
          <ColHead key={c} $w={c === 'K' ? 131 : 130} $selected={c === 'K'}>{c}</ColHead>
        ))}
      </HeaderRow>
      <Row $header>
        <RowHead>1</RowHead>
        <HeadCell $w={351}>movie_title<FilterBtn><Triangle $s={7} $color="#666" /></FilterBtn></HeadCell>
        <HeadCell $w={146}>gross<FilterBtn><Triangle $s={7} $color="#666" /></FilterBtn></HeadCell>
        <HeadCell $w={146}>budget<FilterBtn><Triangle $s={7} $color="#666" /></FilterBtn></HeadCell>
        <HeadCell $w={154}>loss
          <FilterBtn>
            <Triangle $s={4} $color="#666" />
            <Svg width="8" height="24" viewBox="0 0 8 24" fill="none" stroke="#555" strokeWidth="1.6"><path d="M4 24V2M1 7l3-5 3 5" /></Svg>
          </FilterBtn>
        </HeadCell>
      </Row>
      {movies.map(([title, gross, budget, loss], i) => (
        <Row key={title}>
          <RowHead $selected={i + 2 === 34}>{i + 2}</RowHead>
          <DataCell $w={351} $title>{title}</DataCell>
          <DataCell $w={146}>{gross}</DataCell>
          <DataCell $w={146}>{budget}</DataCell>
          <DataCell $w={154} $right>{loss}</DataCell>
        </Row>
      ))}
      <ChartFrame>
        <Svg width="1914" height="1278" viewBox="0 0 1914 1278">
          <defs>
            <filter id="glow" x="-5%" y="-5%" width="110%" height="110%"><feGaussianBlur stdDeviation="2" /></filter>
          </defs>
          <ChartTitle x="957" y="42">Loss (removed outlier loss above 100000000)</ChartTitle>
          <g stroke="#4c4c4c" strokeWidth="2">
            {[0, 1, 2, 3, 4, 5, 6].map((i) => (
              <line key={i} x1="109" x2="1852" y1={74 + i * 197} y2={74 + i * 197} />
            ))}
            {[0, 1, 2, 3, 4, 5, 6].map((i) => (
              <line key={i} x1={109 + i * 290.5} x2={109 + i * 290.5} y1="74" y2="1258" strokeWidth={i === 0 ? 2 : 1.5} />
            ))}
          </g>
          {['0', '-20000000', '-40000000', '-60000000', '-80000000', '-1E+08', '-1.2E+08'].map((t, i) => (
            <AxisLabel key={t} $anchor="end" x="93" y={80 + i * 197}>{t}</AxisLabel>
          ))}
          <g filter="url(#glow)" fill="#e8620a">
            {points.map(([x, y], i) => <circle key={i} cx={x} cy={y} r="8" opacity="0.5" />)}
          </g>
          <g fill="#f4a26c">
            {points.map(([x, y], i) => <circle key={i} cx={x} cy={y} r="3.5" />)}
          </g>
          {['0', '50000000', '100000000', '150000000', '200000000', '250000000', '300000000'].map((t, i) => (
            <AxisLabel key={t} $anchor="middle" x={109 + i * 290.5} y="105">{t}</AxisLabel>
          ))}
        </Svg>
      </ChartFrame>
    </Sheet>

    <TabBar>
      <TabNav><NavArrow $left /><NavArrow /></TabNav>
      {tabs.map(([name, w]) => (
        name === 'Loss'
          ? <ActiveTab key={name} $w={w}><ActiveFace>{name}</ActiveFace></ActiveTab>
          : <SheetTab key={name} $w={w}>{name}</SheetTab>
      ))}
      <AddTab>
        <Svg width="18" height="20" viewBox="0 0 18 20" stroke="#8a8a8a" strokeWidth="3"><path d="M0 10h18M9 0v20" /></Svg>
      </AddTab>
    </TabBar>
    <StatusBar>
      <Ready>Ready</Ready>
      <StatusRight>
        <ViewBtn $w={73} $active>
          <Svg width="25" height="26" viewBox="0 0 25 26"><rect width="25" height="26" rx="2" fill="#fff" /><path d="M8 0v26M17 0v26M0 7h25M0 13h25M0 19h25" stroke="#2c2c2c" strokeWidth="1.5" /></Svg>
        </ViewBtn>
        <ViewBtn $w={71}>
          <Svg width="29" height="26" viewBox="0 0 29 26"><rect width="29" height="26" rx="2" fill="#fff" /><rect x="4" y="3" width="21" height="20" fill="#2c2c2c" /><rect x="9" y="6" width="11" height="14" fill="#fff" /><path d="M9 10h11M9 15h11" stroke="#2c2c2c" strokeWidth="1.5" /></Svg>
        </ViewBtn>
        <ViewBtn $w={71}>
          <Svg width="27" height="26" viewBox="0 0 27 26"><rect width="27" height="26" rx="2" fill="#fff" /><rect x="2" y="3" width="23" height="20" fill="#2c2c2c" /><path d="M2 14h14M16 3v11M9 3v11" stroke="#fff" strokeWidth="2" /></Svg>
        </ViewBtn>
        <Svg width="15" height="6" viewBox="0 0 15 6" style={{ marginLeft: 17 }}><rect width="15" height="6" rx="1" fill="#fff" /></Svg>
        <Zoomer><ZoomThumb /></Zoomer>
        <Svg width="16" height="16" viewBox="0 0 16 16" stroke="#fff" strokeWidth="3"><path d="M0 8h16M8 0v16" /></Svg>
        <ZoomText>100%</ZoomText>
      </StatusRight>
    </StatusBar>
  </Page>
);

export default App;
